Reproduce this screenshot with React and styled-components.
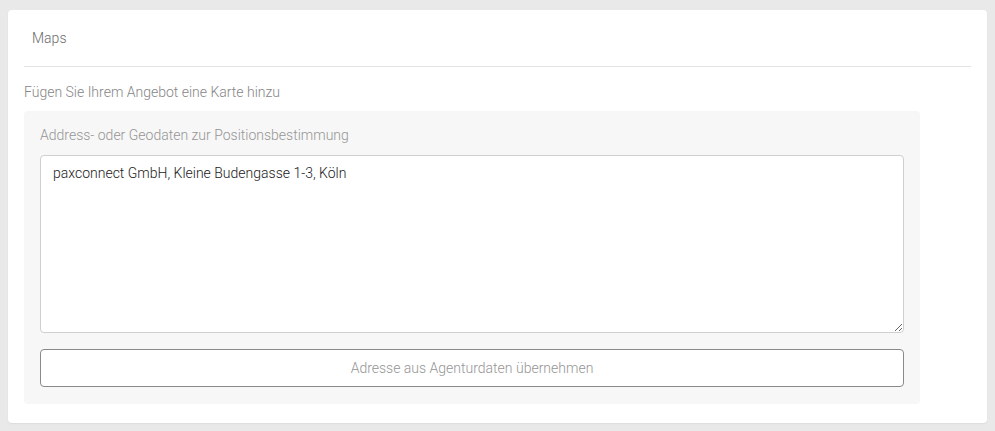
import React from "react";
import styled, { createGlobalStyle } from "styled-components";

const Global = createGlobalStyle`
  html, body { margin: 0; padding: 0; background: #e9e9e9; }
  body { font-family: Roboto, "Liberation Sans", Arial, sans-serif; font-size: 14px; font-weight: 300; }
  * { box-sizing: border-box; }
`;

const Page = styled.div`
  padding: 10px 8px 9px;
`;

const Card = styled.section`
  background: #fff;
  border-radius: 4px;
  box-shadow: 0 1px 2px rgba(0,0,0,0.06);
  padding: 0 16px 19px;
`;

const Header = styled.header`
  height: 57px;
  display: flex;
  align-items: center;
  padding-left: 8px;
  border-bottom: 1px solid #e4e4e4;
  color: #6a6a6a;
  font-size: 14px;
  font-weight: 300;
`;

const Intro = styled.p`
  margin: 15px 0 9px;
  line-height: 20px;
  color: #858585;
  font-size: 14px;
`;

const Panel = styled.div`
  width: 896px;
  background: #f7f7f7;
  border-radius: 4px;
  padding: 14px 16px 17px;
  display: flex;
  flex-direction: column;
`;

const Label = styled.label`
  line-height: 20px;
  color: #959595;
  font-size: 14px;
  margin-bottom: 10px;
`;

const Area = styled.textarea`
  display: block;
  width: 100%;
  height: 178px;
  border: 1px solid #cfcfcf;
  border-radius: 4px;
  background: #fff;
  padding: 7px 12px;
  font-family: inherit;
  font-size: 14px;
  font-weight: 300;
  line-height: 20px;
  color: #1a1a1a;
  resize: vertical;
  outline: none;
  margin: 0 0 16px;
`;

const Button = styled.button`
  height: 38px;
  width: 100%;
  border: 1px solid #8a8a8a;
  border-radius: 4px;
  background: #fff;
  color: #959595;
  font-family: inherit;
  font-size: 14px;
  font-weight: 300;
  cursor: pointer;
`;

export default function App() {
  return (
    <>
      <Global />
      <Page>
        <Card>
          <Header>Maps</Header>
          <Intro>Fügen Sie Ihrem Angebot eine Karte hinzu</Intro>
          <Panel>
            <Label>Address- oder Geodaten zur Positionsbestimmung</Label>
            <Area defaultValue="paxconnect GmbH, Kleine Budengasse 1-3, Köln" />
            <Button>Adresse aus Agenturdaten übernehmen</Button>
          </Panel>
        </Card>
      </Page>
    </>
  );
}
